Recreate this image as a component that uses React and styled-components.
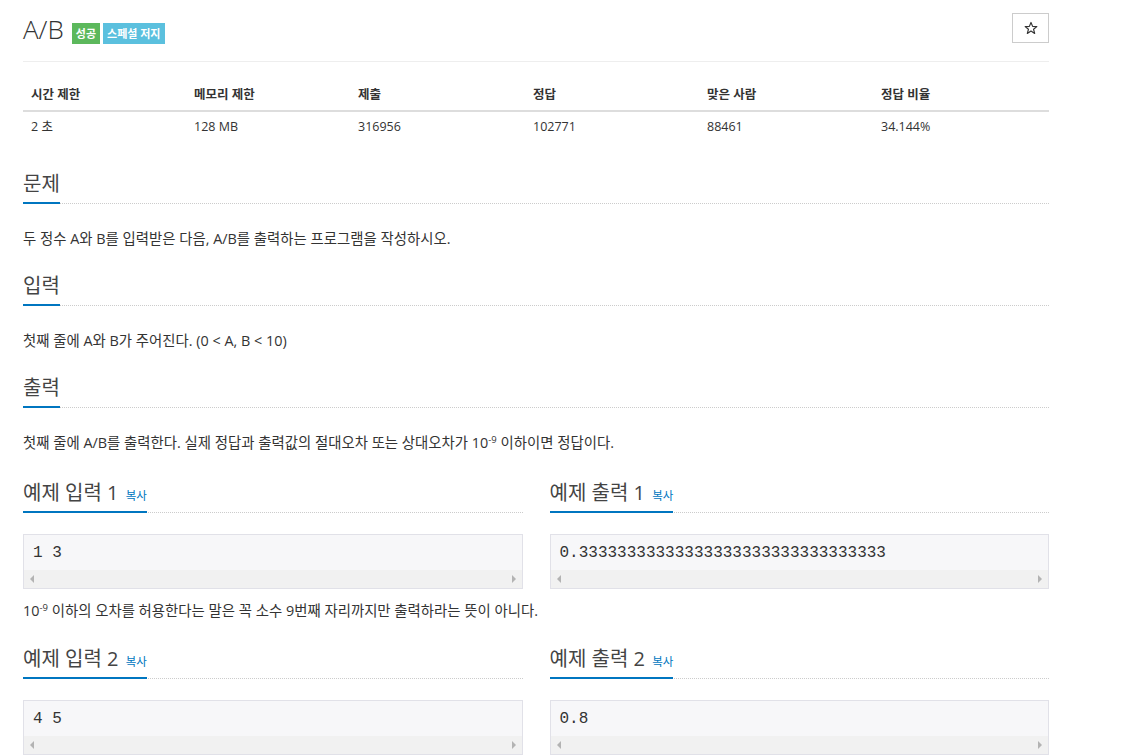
import React from "react";
import styled, { createGlobalStyle } from "styled-components";

const GlobalStyle = createGlobalStyle`
  html, body { margin: 0; padding: 0; background: #fff; }
  body {
    font-family: "Open Sans", "Noto Sans CJK KR", sans-serif;
    font-size: 14px;
    color: #333;
  }
  * { box-sizing: border-box; }
`;

const Page = styled.div`
  width: 1026px;
  margin-left: 23px;
`;

const Header = styled.div`
  display: flex;
  justify-content: space-between;
  align-items: flex-start;
  height: 62px;
  padding-top: 13px;
  border-bottom: 1px solid #eee;
`;

const TitleGroup = styled.div`
  display: flex;
  align-items: flex-start;
  margin-top: 2px;
`;

const Title = styled.h1`
  margin: 0 8px 0 0;
  font-size: 26px;
  line-height: 29px;
  font-weight: 300;
  color: #333;
`;

const Badge = styled.span`
  display: inline-flex;
  align-items: center;
  height: 21px;
  margin: 8px 3px 0 0;
  padding: 0 4px;
  font-size: 11px;
  font-weight: 700;
  line-height: 1;
  color: #fff;
  background: ${(p) => p.$bg};
`;

const StarButton = styled.button`
  display: flex;
  align-items: center;
  justify-content: center;
  width: 37px;
  height: 30px;
  padding: 0;
  background: #fff;
  border: 1px solid #ccc;
  cursor: pointer;
`;

const Table = styled.table`
  width: 100%;
  border-collapse: collapse;
  table-layout: fixed;
  margin-top: 16px;
  margin-bottom: 4px;
  font-size: 12.5px;
`;

const Col = styled.col`
  width: ${(p) => p.$w};
`;

const Th = styled.th`
  text-align: left;
  font-weight: 700;
  padding: 8px 8px 6px;
  line-height: 18px;
  border-bottom: 2px solid #ddd;
  color: #333;
`;

const Td = styled.td`
  padding: 6px 8px 8px;
  line-height: 18px;
  color: #333;
`;

const Section = styled.section`
  margin-top: ${(p) => p.$top || "25px"};
`;

const HeadlineWrap = styled.div`
  display: flex;
  align-items: flex-end;
  border-bottom: 1px dotted #ccc;
`;

const Headline = styled.h2`
  margin: 0 0 -1px 0;
  padding-bottom: 6px;
  font-size: 20px;
  line-height: 24px;
  font-weight: 400;
  color: #444;
  border-bottom: 2px solid #0076c0;
`;

const CopyLink = styled.a`
  margin-left: 2px;
  font-size: 11.5px;
  line-height: 1;
  color: #0076c0;
  text-decoration: none;
  cursor: pointer;
`;

const Text = styled.p`
  margin: ${(p) => p.$margin || "25px 0 0"};
  font-size: 14.4px;
  line-height: 20px;
  color: #333;
`;

const Sup = styled.sup`
  position: relative;
  top: -5px;
  font-size: 9.5px;
  line-height: 1;
  vertical-align: baseline;
`;

const Samples = styled.div`
  display: grid;
  grid-template-columns: 1fr 1fr;
  column-gap: 27px;
  margin-top: 28px;
`;

const Sample = styled.div`
  min-width: 0;
`;

const FullRow = styled.div`
  grid-column: 1 / -1;
`;

const RowSection = styled.div`
  grid-column: 1 / -1;
  display: grid;
  grid-template-columns: 1fr 1fr;
  column-gap: 27px;
  margin-top: ${(p) => p.$top || "0"};
`;

const PreBox = styled.div`
  margin-top: 21px;
  background: #f7f7f9;
  border: 1px solid #e1e1e8;
`;

const Code = styled.pre`
  margin: 0;
  padding: 9px 9px 8px;
  font-family: "Liberation Mono", monospace;
  font-size: 16px;
  line-height: 18px;
  color: #333;
  white-space: pre;
  overflow: hidden;
`;

const ScrollTrack = styled.div`
  display: flex;
  justify-content: space-between;
  align-items: center;
  height: 18px;
  padding: 0 6px;
  background: #f1f1f1;
`;

const Arrow = styled.span`
  width: 0;
  height: 0;
  border-top: 4px solid transparent;
  border-bottom: 4px solid transparent;
  ${(p) =>
    p.$dir === "left"
      ? "border-right: 4px solid #b3b3b3;"
      : "border-left: 4px solid #b3b3b3;"}
`;

function StarIcon() {
  return (
    <svg width="14" height="14" viewBox="0 0 24 24">
      <polygon
        points="12,2.5 14.8,9.2 22,9.6 16.4,14.2 18.3,21.3 12,17.3 5.7,21.3 7.6,14.2 2,9.6 9.2,9.2"
        fill="none"
        stroke="#333"
        strokeWidth="2"
        strokeLinejoin="round"
      />
    </svg>
  );
}

function Headed({ title, copy, children }) {
  return (
    <>
      <HeadlineWrap>
        <Headline>
          {title}
          {copy && <> <CopyLink>복사</CopyLink></>}
        </Headline>
      </HeadlineWrap>
      {children}
    </>
  );
}

function SampleBlock({ title, code }) {
  return (
    <Sample>
      <Headed title={title} copy>
        <PreBox>
          <Code>{code}</Code>
          <ScrollTrack>
            <Arrow $dir="left" />
            <Arrow $dir="right" />
          </ScrollTrack>
        </PreBox>
      </Headed>
    </Sample>
  );
}

const stats = [
  ["시간 제한", "2 초", "163px"],
  ["메모리 제한", "128 MB", "164px"],
  ["제출", "316956", "175px"],
  ["정답", "102771", "174px"],
  ["맞은 사람", "88461", "174px"],
  ["정답 비율", "34.144%", "176px"],
];

export default function App() {
  return (
    <>
      <GlobalStyle />
      <Page>
        <Header>
          <TitleGroup>
            <Title>A/B</Title>
            <Badge $bg="#5cb85c">성공</Badge>
            <Badge $bg="#5bc0de">스페셜 저지</Badge>
          </TitleGroup>
          <StarButton aria-label="star">
            <StarIcon />
          </StarButton>
        </Header>

        <Table>
          <colgroup>
            {stats.map(([h, , w]) => (
              <Col key={h} $w={w} />
            ))}
          </colgroup>
          <thead>
            <tr>
              {stats.map(([h]) => (
                <Th key={h}>{h}</Th>
              ))}
            </tr>
          </thead>
          <tbody>
            <tr>
              {stats.map(([h, v]) => (
                <Td key={h}>{v}</Td>
              ))}
            </tr>
          </tbody>
        </Table>

        <Section $top="28px">
          <Headed title="문제">
            <Text>두 정수 A와 B를 입력받은 다음, A/B를 출력하는 프로그램을 작성하시오.</Text>
          </Headed>
        </Section>

        <Section>
          <Headed title="입력">
            <Text>첫째 줄에 A와 B가 주어진다. (0 &lt; A, B &lt; 10)</Text>
          </Headed>
        </Section>

        <Section>
          <Headed title="출력">
            <Text>
              첫째 줄에 A/B를 출력한다. 실제 정답과 출력값의 절대오차 또는 상대오차가 10<Sup>-9</Sup> 이하이면 정답이다.
            </Text>
          </Headed>
        </Section>

        <Samples>
          <RowSection>
            <SampleBlock title="예제 입력 1" code="1 3" />
            <SampleBlock title="예제 출력 1" code="0.33333333333333333333333333333333" />
          </RowSection>
          <FullRow>
            <Text $margin="12px 0 0">
              10<Sup>-9</Sup> 이하의 오차를 허용한다는 말은 꼭 소수 9번째 자리까지만 출력하라는 뜻이 아니다.
            </Text>
          </FullRow>
          <RowSection $top="26px">
            <SampleBlock title="예제 입력 2" code="4 5" />
            <SampleBlock title="예제 출력 2" code="0.8" />
          </RowSection>
        </Samples>
      </Page>
    </>
  );
}
